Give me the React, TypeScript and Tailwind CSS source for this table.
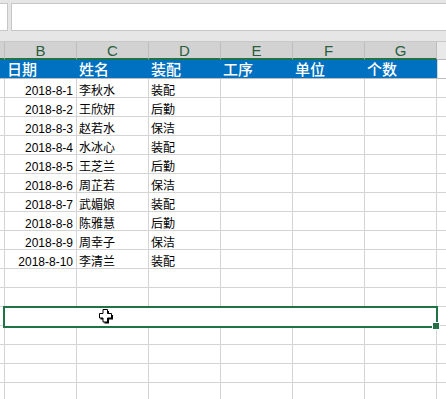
import React from "react";

const data = [
  ["2018-8-1", "李秋水", "装配"],
  ["2018-8-2", "王欣妍", "后勤"],
  ["2018-8-3", "赵若水", "保洁"],
  ["2018-8-4", "水冰心", "装配"],
  ["2018-8-5", "王芝兰", "后勤"],
  ["2018-8-6", "周芷若", "保洁"],
  ["2018-8-7", "武媚娘", "装配"],
  ["2018-8-8", "陈雅慧", "后勤"],
  ["2018-8-9", "周幸子", "保洁"],
  ["2018-8-10", "李清兰", "装配"],
];

const cjk = { fontFamily: '"Liberation Sans", "Noto Sans CJK SC", sans-serif' };

function GridRow({ cells }: { cells?: [string, string, string] }) {
  return (
    <div className="flex h-[19px] border-b border-[#d4d4d4] text-[12px] leading-[12px] text-black">
      <div className="w-[5px] shrink-0 border-r border-[#d4d4d4]" />
      <div className="w-[72px] shrink-0 border-r border-[#d4d4d4] pr-[3px] flex items-end justify-end whitespace-nowrap">
        {cells ? cells[0] : ""}
      </div>
      <div className="w-[72px] shrink-0 border-r border-[#d4d4d4] pl-[2px] flex items-end whitespace-nowrap">
        {cells ? cells[1] : ""}
      </div>
      <div className="w-[72px] shrink-0 border-r border-[#d4d4d4] pl-[2px] flex items-end whitespace-nowrap">
        {cells ? cells[2] : ""}
      </div>
      <div className="w-[72px] shrink-0 border-r border-[#d4d4d4]" />
      <div className="w-[72px] shrink-0 border-r border-[#d4d4d4]" />
      <div className="w-[72px] shrink-0 border-r border-[#d4d4d4]" />
      <div className="flex-1" />
    </div>
  );
}

export default function App() {
  const cols = ["B", "C", "D", "E", "F", "G"];
  const heads = ["日期", "姓名", "装配", "工序", "单位", "个数"];
  return (
    <div className="relative w-[446px] h-[399px] overflow-hidden bg-white" style={cjk}>
      {/* formula bar */}
      <div className="h-[42px] bg-[#e6e6e6] pt-[3px] border-b border-[#c8c8c8]">
        <div className="flex h-[28px]">
          <div className="w-[8px] bg-white border-y border-r border-[#c6c6c6]" />
          <div className="ml-[3px] flex-1 bg-white border-y border-l border-[#c6c6c6]" />
        </div>
      </div>
      {/* column headers */}
      <div className="flex h-[18px]">
        <div className="w-[5px] shrink-0 bg-[#d2d2d2] border-r border-[#bdbdbd] border-b-2 border-b-[#217346]" />
        {cols.map((c) => (
          <div
            key={c}
            className="w-[72px] shrink-0 bg-[#d2d2d2] border-r border-[#bdbdbd] border-b-2 border-b-[#217346] text-center text-[15px] leading-[18px] text-[#2a5e3e]"
            style={{ fontFamily: '"Liberation Sans", sans-serif' }}
          >
            {c}
          </div>
        ))}
        <div className="flex-1 bg-[#e9e9e9] border-b border-[#bdbdbd]" />
      </div>
      {/* blue title row */}
      <div className="flex h-[19px] border-b border-[#bdbdbd]">
        <div className="w-[5px] shrink-0 bg-[#0070c0]" />
        {heads.map((h, i) => (
          <div
            key={i}
            className="w-[72px] shrink-0 bg-[#0070c0] pl-[2px] flex items-end text-[15px] leading-[17px] font-medium text-white whitespace-nowrap"
          >
            {h}
          </div>
        ))}
        <div className="flex-1 border-l border-[#d4d4d4]" />
      </div>
      {data.map((r, i) => (
        <GridRow key={i} cells={r as [string, string, string]} />
      ))}
      {Array.from({ length: 7 }).map((_, i) => (
        <GridRow key={"e" + i} />
      ))}

      {/* selection (merged cell) */}
      <div className="absolute left-[3px] top-[306px] w-[435px] h-[22px] border-2 border-[#217346] bg-white" />
      <div className="absolute left-[432px] top-[322px] w-[8px] h-[8px] bg-white" />
      <div className="absolute left-[433px] top-[323px] w-[6px] h-[6px] bg-[#217346]" />

      {/* cursor */}
      <svg className="absolute left-[99px] top-[309px]" width="14" height="15" viewBox="0 0 14 15">
        <path d="M5 1.5h4.5v4h4v4.5h-4v4H5v-4H1v-4.5h4z" fill="#000" transform="translate(0.5 0.5)" />
        <path d="M4 0.5h4.5v4h4v4.5h-4v4H4v-4H0.5V4.5H4z" fill="#fff" stroke="#000" strokeWidth="1" />
      </svg>
    </div>
  );
}
